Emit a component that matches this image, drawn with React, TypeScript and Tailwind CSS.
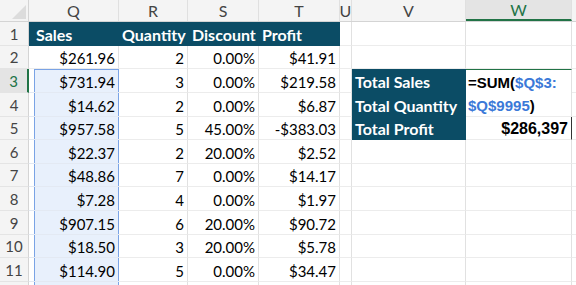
import React from 'react';

const rowHeights = ['h-[24px]', 'h-[23px]', 'h-[24px]', 'h-[24px]', 'h-[23px]', 'h-[24px]', 'h-[23px]', 'h-[24px]', 'h-[24px]', 'h-[23px]', 'h-[24px]', 'h-[24px]'];

const rows: string[][] = [
  ['$261.96', '2', '0.00%', '$41.91'],
  ['$731.94', '3', '0.00%', '$219.58'],
  ['$14.62', '2', '0.00%', '$6.87'],
  ['$957.58', '5', '45.00%', '-$383.03'],
  ['$22.37', '2', '20.00%', '$2.52'],
  ['$48.86', '7', '0.00%', '$14.17'],
  ['$7.28', '4', '0.00%', '$1.97'],
  ['$907.15', '6', '20.00%', '$90.72'],
  ['$18.50', '3', '20.00%', '$5.78'],
  ['$114.90', '5', '0.00%', '$34.47'],
];

const totals: Record<number, string> = { 3: 'Total Sales', 4: 'Total Quantity', 5: 'Total Profit' };

const grid = 'border-r border-b border-r-[#e1e1e1] border-b-[#ececec]';
const teal = 'bg-[#0b4c65] border-r border-b border-[#0b4c65] text-white font-bold text-[16px]';
const num = 'flex items-end justify-end pr-[3px] pb-[1px]';
const arial = "[font-family:'Liberation_Sans',Arial,sans-serif]";

const App: React.FC = () => {
  return (
    <div className="w-[576px] h-[285px] overflow-hidden bg-white text-[15px] leading-[18px] text-black [font-family:Lato,sans-serif]">
      {/* Column headers */}
      <div className="flex h-[22px] bg-[#f4f4f4] text-[#444] text-[16px] border-b border-[#d4d4d4]">
        <div className="w-[29px] shrink-0 border-r border-[#d4d4d4] flex items-end justify-end p-[2px]">
          <svg width="14" height="14" viewBox="0 0 14 14">
            <polygon points="14,0 14,14 0,14" fill="#dcdcdc" />
          </svg>
        </div>
        <div className="w-[90px] shrink-0 border-r border-[#e0e0e0] flex items-center justify-center">Q</div>
        <div className="w-[69px] shrink-0 border-r border-[#e0e0e0] flex items-center justify-center">R</div>
        <div className="w-[71px] shrink-0 border-r border-[#e0e0e0] flex items-center justify-center">S</div>
        <div className="w-[81px] shrink-0 border-r border-[#e0e0e0] flex items-center justify-center">T</div>
        <div className="w-[12px] shrink-0 border-r border-[#e0e0e0] flex items-center justify-center">U</div>
        <div className="w-[114px] shrink-0 border-r border-[#e0e0e0] flex items-center justify-center">V</div>
        <div className="w-[106px] shrink-0 border-r border-[#e0e0e0] bg-[#e4e4e4] text-[#217346] border-b-2 border-b-[#217346] flex items-center justify-center">W</div>
        <div className="flex-1" />
      </div>

      {rowHeights.map((h, i) => {
        const r = i + 1;
        const d = r >= 2 && r <= 11 ? rows[r - 2] : null;
        const active = r === 3;
        return (
          <div key={r} className={`flex ${h}`}>
            {/* Row header */}
            <div
              className={`w-[29px] shrink-0 flex items-center justify-center border-b border-b-[#e4e4e4] ${
                active ? 'bg-[#e4e4e4] text-[#217346] border-r-2 border-r-[#217346]' : 'bg-[#f4f4f4] text-[#444] border-r border-r-[#d4d4d4]'
              }`}
            >
              {r <= 11 ? r : ''}
            </div>

            {/* Q */}
            {r === 1 ? (
              <div className={`w-[90px] shrink-0 ${teal} flex items-end pl-[7px] pb-[1px]`}>Sales</div>
            ) : r === 2 ? (
              <div className={`w-[90px] shrink-0 ${grid} ${num}`}>{d?.[0]}</div>
            ) : (
              <div className="w-[90px] shrink-0 flex border-b border-b-[#e3e9f3]">
                <div className="w-[5px] shrink-0" />
                <div
                  className={`flex-1 bg-[#e8f0fc] border-l border-r border-[#7aa3e5] ${
                    r === 3 ? 'border-t' : ''
                  } ${num}`}
                >
                  {d?.[0]}
                </div>
              </div>
            )}

            {/* R */}
            {r === 1 ? (
              <div className={`w-[69px] shrink-0 ${teal} flex items-end pl-[3px] pb-[1px]`}>Quantity</div>
            ) : (
              <div className={`w-[69px] shrink-0 ${grid} ${num}`}>{d?.[1]}</div>
            )}

            {/* S */}
            {r === 1 ? (
              <div className={`w-[71px] shrink-0 ${teal} flex items-end pl-[4px] pb-[1px]`}>Discount</div>
            ) : (
              <div className={`w-[71px] shrink-0 ${grid} ${num}`}>{d?.[2]}</div>
            )}

            {/* T */}
            {r === 1 ? (
              <div className={`w-[81px] shrink-0 ${teal} flex items-end pl-[3px] pb-[1px]`}>Profit</div>
            ) : (
              <div className={`w-[81px] shrink-0 ${grid} ${num}`}>{d?.[3]}</div>
            )}

            {/* U */}
            <div className={`w-[12px] shrink-0 ${grid}`} />

            {/* V */}
            {totals[r] ? (
              <div className={`w-[114px] shrink-0 ${teal} flex items-end pl-[3px] pb-[1px]`}>{totals[r]}</div>
            ) : (
              <div className={`w-[114px] shrink-0 ${grid}`} />
            )}

            {/* W */}
            {r === 3 ? (
              <div className={`w-[106px] shrink-0 border-t border-t-[#217346] border-r border-r-[#e1e1e1] flex items-end pl-[2px] pb-[1px] font-bold whitespace-nowrap ${arial}`}>
                <span>=SUM(</span>
                <span className="text-[#3b79d8]">$Q$3:</span>
              </div>
            ) : r === 4 ? (
              <div className={`w-[106px] shrink-0 ${grid} flex items-end pl-[2px] pb-[1px] font-bold whitespace-nowrap ${arial}`}>
                <span className="text-[#3b79d8]">$Q$9995</span>
                <span>)</span>
              </div>
            ) : r === 5 ? (
              <div className={`w-[106px] shrink-0 border-b border-b-[#ececec] border-r border-r-[#333] flex items-end justify-end pr-[3px] pb-[1px] font-bold text-[16px] ${arial}`}>
                $286,397
              </div>
            ) : (
              <div className={`w-[106px] shrink-0 ${grid}`} />
            )}

            {/* X */}
            <div className="flex-1 border-b border-b-[#ececec]" />
          </div>
        );
      })}
    </div>
  );
};

export default App;
